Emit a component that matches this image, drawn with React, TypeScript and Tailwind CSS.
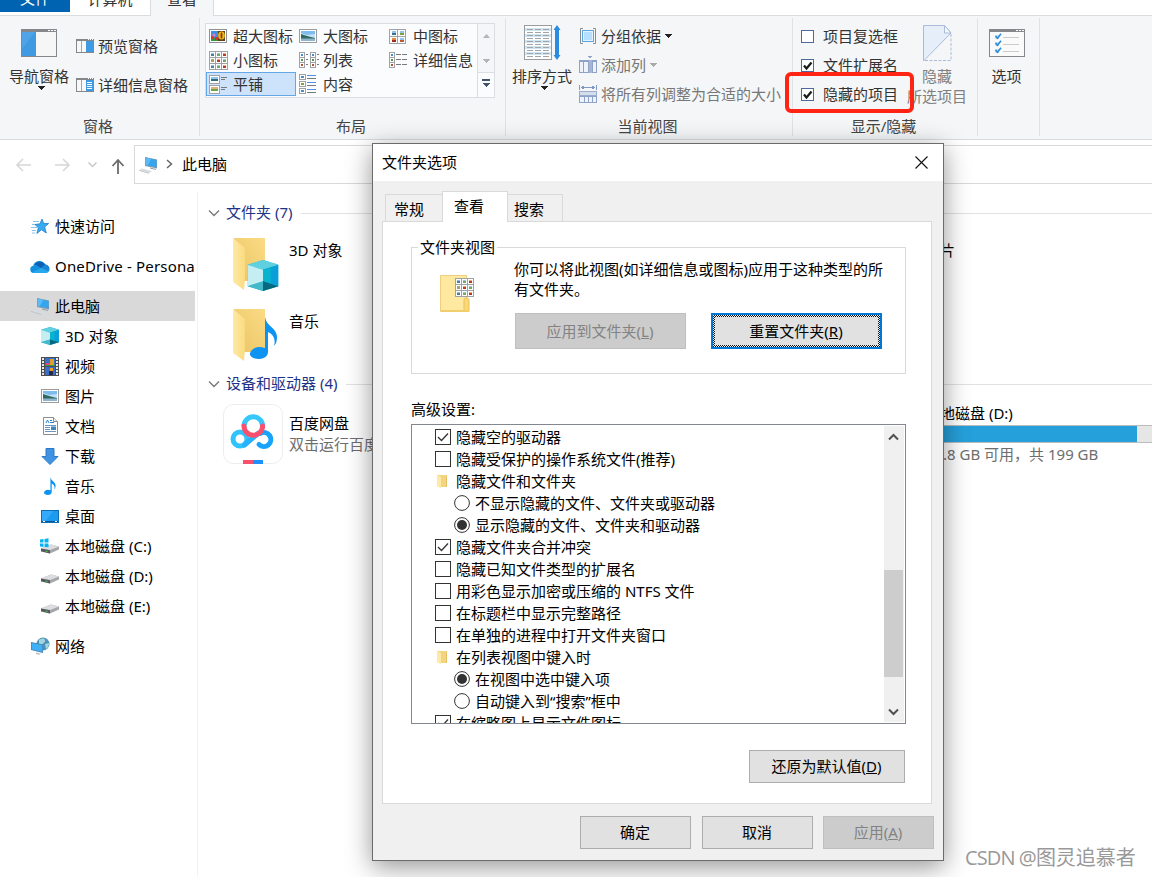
import type { ReactNode } from 'react'
import clsx from 'clsx'

const Caret = ({ className = 'fill-[#222]' }: { className?: string }) => (
  <svg width="7" height="4" viewBox="0 0 7 4" className={className} shapeRendering="crispEdges">
    <path d="M0 0h7v1H6v1H5v1H4v1H3V3H2V2H1V1H0z" />
  </svg>
)

const Chevron = ({ className }: { className?: string }) => (
  <svg width="12" height="8" viewBox="0 0 12 8" fill="none" className={className}>
    <path d="M1 1.500l5 5 5-5" stroke="currentColor" strokeWidth="1.300" />
  </svg>
)

const ScrollArrow = ({ className }: { className?: string }) => (
  <svg width="11" height="8" viewBox="0 0 11 8" fill="none" className={className}>
    <path d="M1 1.500l4.500 4.500L10 1.500" stroke="#505050" strokeWidth="2" />
  </svg>
)

/* ---------- ribbon icons ---------- */

const PaneIcon = ({ side, big }: { side: 'left' | 'right' | 'details'; big?: boolean }) =>
  big ? (
    <svg width="36" height="28" viewBox="0 0 36 28" className="shrink-0">
      <rect x=".5" y=".5" width="35" height="27" fill="#f6f6f6" stroke="#85878a" />
      <path d="M0 0h36v3H0z" fill="#85878a" />
      <path d="M27 1h2v1h-2zM30 1h2v1h-2zM33 1h2v1h-2z" fill="#fff" />
      <path d="M1 3h14v24H1z" fill="#3f9ae2" />
      <path d="M1 3h13L1 20z" fill="#4fa3e6" />
    </svg>
  ) : (
    <svg width="18" height="14" viewBox="0 0 18 14" className="shrink-0">
      <rect x=".5" y=".5" width="17" height="13" fill="#f8f8f8" stroke="#85878a" />
      <path d="M0 0h18v2H0z" fill="#85878a" />
      <path d="M12 0h1v1h-1zM14 0h1v1h-1zM16 0h1v1h-1z" fill="#fff" />
      <path d="M5 2h1v11H5z" fill="#a5a7aa" />
      <path d="M10 2h7v11h-7z" fill="#3f9ae2" />
      {side === 'details' && <path d="M11 4h5v1h-5zM11 6h5v1h-5zM11 8h5v1h-5zM11 10h5v1h-5z" fill="#fff" />}
    </svg>
  )

const Thumb = ({ x, y, tone }: { x: number; y: number; tone: number }) => {
  const tones = [
    ['#8fc4ee', '#4b7f9e'],
    ['#9cc2e4', '#7aa85a'],
    ['#e8b26c', '#b8392a'],
    ['#8ab88a', '#b09a5c'],
  ]
  const [a, b] = tones[tone % 4]
  return (
    <g>
      <path d={`M${x} ${y}h3v1h-3z`} fill={a} />
      <path d={`M${x} ${y + 1}h3v2h-3z`} fill={b} />
    </g>
  )
}

const GridIcon = () => (
  <svg width="19" height="19" viewBox="0 0 19 19" shapeRendering="crispEdges">
    <path d="M0 0h19v19H0z" fill="#a0a2a5" />
    {[0, 1, 2].map((r) =>
      [0, 1, 2].map((c) => (
        <g key={`${r}${c}`}>
          <rect x={1 + c * 6} y={1 + r * 6} width="5" height="5" fill="#fff" />
          <Thumb x={2 + c * 6} y={2 + r * 6} tone={r === 1 ? 3 - c : c} />
        </g>
      ))
    )}
  </svg>
)

const XLIcon = () => (
  <svg width="18" height="14" viewBox="0 0 18 14">
    <rect x=".5" y=".5" width="17" height="13" fill="#fff" stroke="#8e9093" />
    <path d="M2 2h14v10H2z" fill="#3d8fe0" />
    <path d="M2 9h7v3H2z" fill="#2e9a3c" />
    <path d="M2 7h3v3H2zM6 8h3v3H6z" fill="#e02f2f" />
    <circle cx="5" cy="6" r="1.600" fill="#e878c0" />
    <path d="M9 2h7v10H9z" fill="#5c4418" />
    <ellipse cx="12.500" cy="6.500" rx="3.300" ry="4" fill="#f3b81e" />
    <ellipse cx="12.500" cy="6.500" rx="1" ry="3.200" fill="#8a3b12" />
  </svg>
)

const PhotoIcon = () => (
  <svg width="18" height="14" viewBox="0 0 18 14">
    <rect x=".5" y=".5" width="17" height="13" fill="#fff" stroke="#9a9c9f" />
    <path d="M2 2h14v10H2z" fill="#c3e1f7" />
    <path d="M2 2h14v3L8 6 2 4z" fill="#7fbcee" />
    <path d="M2 5c4 1 8 3 14 4v1H2z" fill="#2f6b62" />
    <path d="M2 9.500h14V12H2z" fill="#8fb4cc" />
  </svg>
)

const MediumIcon = () => (
  <svg width="17" height="15" viewBox="0 0 17 15" shapeRendering="crispEdges">
    <path d="M0 0h17v15H0z" fill="#a0a2a5" />
    {[0, 1, 2, 3].map((i) => {
      const x = (i % 2) * 8 + 1
      const y = i < 2 ? 1 : 8
      return (
        <g key={i}>
          <rect x={x} y={y} width="7" height="6" fill="#fff" />
          <rect x={x + 2} y={y + 1} width="4" height="2" fill={i === 2 ? '#e8843c' : '#8fc4ee'} />
          <rect x={x + 2} y={y + 3} width="4" height="2" fill={['#3b6f8e', '#7aa23c', '#a8281c', '#c0592b'][i]} />
        </g>
      )
    })}
  </svg>
)

const ListIcon = ({ cols }: { cols: 1 | 2 }) => (
  <svg width="20" height="16" viewBox="0 0 20 16" shapeRendering="crispEdges">
    {(cols === 2 ? [0, 11] : [0]).map((x) => (
      <g key={x}>
        <rect x={x} y="0" width="6" height="16" fill="#a0a2a5" />
        {[0, 1, 2].map((r) => (
          <g key={r}>
            <rect x={x + 1} y={1 + r * 5} width="4" height="4" fill="#fff" />
            <rect x={x + 2} y={2 + r * 5} width="2" height="2" fill={['#3f8fd0', '#4f9a4a', '#b0582d'][r]} />
            {cols === 2 ? (
              <rect x={x + 7} y={2 + r * 5} width="2" height="1" fill="#77797c" />
            ) : (
              <>
                <rect x="7" y={2 + r * 5} width="5" height="1" fill="#77797c" />
                <rect x="13" y={2 + r * 5} width="5" height="1" fill="#77797c" />
              </>
            )}
          </g>
        ))}
      </g>
    ))}
  </svg>
)

const TilesIcon = () => (
  <svg width="18" height="19" viewBox="0 0 18 19" shapeRendering="crispEdges">
    {[0, 10].map((y) => (
      <g key={y}>
        <rect y={y} width="11" height="9" fill="#a0a2a5" />
        <rect x="1" y={y + 1} width="9" height="7" fill="#fff" />
        <rect x="2" y={y + 2} width="7" height="3" fill={y ? '#e0b080' : '#8fc4ee'} />
        <rect x="2" y={y + 4} width="7" height="2" fill={y ? '#6fa33f' : '#2f6f7e'} />
        <rect x="12" y={y + 2} width="6" height="1" fill="#77797c" />
        <rect x="12" y={y + 4} width="4" height="1" fill="#77797c" />
      </g>
    ))}
  </svg>
)

const ContentIcon = () => (
  <svg width="18" height="20" viewBox="0 0 18 20" shapeRendering="crispEdges">
    {[0, 7, 14].map((y) => (
      <g key={y}>
        <rect y={y} width="7" height="6" fill="#a0a2a5" />
        <rect x="1" y={y + 1} width="5" height="4" fill="#fff" />
        <rect x="2" y={y + 2} width="3" height="2" fill={y === 7 ? '#8a9a3c' : '#4a8fc0'} />
        <rect x="8" y={y + 1} width="9" height="1" fill="#5a8fe0" />
        <rect x="8" y={y + 4} width="9" height="1" fill="#77797c" />
      </g>
    ))}
  </svg>
)

const SortIcon = () => (
  <svg width="37" height="36" viewBox="0 0 37 36">
    <rect x=".5" y=".5" width="27" height="34" fill="#fff" stroke="#9a9c9f" />
    {[3, 9, 15, 21, 27].map((y) => (
      <rect key={y} x="1" y={y} width="26" height="3" fill="#cfe6f2" />
    ))}
    {[4, 7, 10, 13, 16, 19, 22, 25, 28, 31].map((y) => (
      <path key={y} d={`M3 ${y}h6v1H3zM11 ${y}h6v1h-6zM19 ${y}h6v1h-6z`} fill="#a2a4a6" />
    ))}
    <path d="M33 0l3.500 5H35v25h1.500L33 35l-3.500-5H31V5h-1.500z" fill="#2b8be0" />
  </svg>
)

const GroupByIcon = () => (
  <svg width="18" height="16" viewBox="0 0 18 16" fill="none">
    <path d="M4 .5H1.500v15H4M14 .5h2.500v15H14" stroke="#8a8c8f" />
    <rect x="3.500" y="2.500" width="11" height="11" fill="#b5deff" stroke="#5ba6e0" />
    <rect x="4.500" y="3.500" width="9" height="9" stroke="#e2f3ff" />
  </svg>
)

const AddColumnIcon = () => (
  <svg width="18" height="18" viewBox="0 0 18 18" shapeRendering="crispEdges">
    <path d="M9 0h4v1h-1v1h-2V1H9z" fill="#8fa3c8" />
    <path d="M0 4h18v13H0z" fill="#8fa3c8" />
    <path d="M1 6h3v10H1zM5 6h4v10H5zM14 6h3v10h-3z" fill="#edf2fb" />
    <path d="M10 4h3v13h-3z" fill="#a6b5d2" />
  </svg>
)

const FitColumnsIcon = () => (
  <svg width="18" height="18" viewBox="0 0 18 18" shapeRendering="crispEdges">
    <path d="M0 0h1v5H0zM17 0h1v5h-1zM2 2h14v1H2zM3 1h2v3H3zM13 1h2v3h-2z" fill="#8098c2" />
    <path d="M0 6h18v5H0z" fill="#9badcc" />
    <path d="M1 7h16v3H1z" fill="#d5deed" />
    <path d="M0 11h18v7H0z" fill="#8fa3c8" />
    <path d="M1 12h4v5H1zM6 12h3v5H6zM10 12h3v5h-3zM14 12h3v5h-3z" fill="#edf2fb" />
  </svg>
)

const HideIcon = () => (
  <svg width="29" height="37" viewBox="0 0 29 37" fill="none">
    <path d="M.5 36V.5h21L28 8z" fill="#e6eefa" stroke="#a9bbd8" />
    <path d="M21.500 .5V8H28z" fill="#f5f8fd" stroke="#a9bbd8" />
    <path d="M28 9v26.500H1" stroke="#a9bbd8" strokeDasharray="3 1.500" />
  </svg>
)

const OptionsIcon = () => (
  <svg width="36" height="28" viewBox="0 0 36 28" fill="none">
    <rect x=".5" y=".5" width="35" height="27" fill="#fafafa" stroke="#85878a" />
    <path d="M0 0h36v3H0z" fill="#85878a" />
    <path d="M27 1h2v1h-2zM30 1h2v1h-2zM33 1h2v1h-2z" fill="#fff" />
    {[7, 14, 21].map((y) => (
      <g key={y}>
        <rect x="6" y={y - 1} width="4" height="4" fill="#c5def3" />
        <path d={`M6.500 ${y}l2 2.300 3.500-4.500`} stroke="#2a8de0" strokeWidth="1.600" />
        <path d={`M14 ${y + 1.5}h16`} stroke="#c9cbcd" />
      </g>
    ))}
  </svg>
)

/* ---------- explorer icons ---------- */

const PcIcon = () => (
  <svg width="20" height="18" viewBox="0 0 20 18">
    <path d="M7 1l12 2.500v9L7 10z" fill="#7f99ad" />
    <path d="M7.500 1.500l11 2.500v7.300L7.500 9z" fill="#35a5ee" />
    <path d="M7.500 1.500l6 1.300-4 6.600-2-.4z" fill="#5cbaf6" />
    <path d="M12 11.500l6 1.500v1l-6-1.500z" fill="#8e9ba6" />
    <path d="M1 14l3-1.500 10 2.800-3 1.700z" fill="#d6dbdf" />
    <path d="M1 14l10 3v.8L1 14.800z" fill="#b5bcc2" />
  </svg>
)

const CubeIcon = ({ size = 18 }: { size?: number }) => (
  <svg width={size} height={size} viewBox="0 0 32 32">
    <path d="M0 5l16-5 16 5v22l-16 5-16-5z" fill="#29b7cf" />
    <path d="M0 5l16-5 16 5-16 5z" fill="#5ed0e0" />
    <path d="M0 5l16 5v12L0 27z" fill="#c4eef2" />
    <path d="M16 10l16-5v22l-16-5z" fill="#0a9fd8" />
    <path d="M16 10l8-2.500v17L16 22z" fill="#07b3cf" />
    <path d="M0 27l16-5v10z" fill="#43b9c9" />
    <path d="M16 22l16 5-16 5z" fill="#07697f" />
  </svg>
)

const NotePath = () => (
  <path d="M15 0c1 9 12 11 12 20 0 4-1 7-3 9 2-7-1-12-6-14v20c0 4-4 7-9 7S0 40 0 37s4-7 9-7c2 0 4 .5 6 1V0z" fill="#0d94f2" />
)

const VideoIcon = () => (
  <svg width="18" height="19" viewBox="0 0 18 19" shapeRendering="crispEdges">
    <path d="M0 0h18v19H0z" fill="#4a4c4f" />
    <path d="M4 1h10v8H4zM4 10h10v8H4z" fill="#3a6fd0" />
    {[1, 4, 7, 10, 13, 16].map((y) => (
      <path key={y} d={`M1 ${y}h2v2H1zM15 ${y}h2v2h-2z`} fill="#e8e8e8" />
    ))}
    <path d="M5 6h4v3H5z" fill="#d84a8a" />
    <path d="M9 2h4v6H9z" fill="#e0a020" />
    <path d="M4 8h10v1H4z" fill="#3a9a3c" />
    <path d="M9 11h3v3H9z" fill="#f0a01e" />
    <path d="M8 14h4v4H8z" fill="#252a40" />
  </svg>
)

const DocIcon = () => (
  <svg width="15" height="18" viewBox="0 0 15 18">
    <path d="M.5.500h10l4 4v13H.5z" fill="#fff" stroke="#8a8c8f" />
    <path d="M10.500.500v4h4" fill="#eee" stroke="#8a8c8f" />
    <path d="M3 6l1.500-3L6 6M7 3.500h2M7 5.500h4" stroke="#2a86d0" fill="none" />
    <path d="M2 8.500h11M2 10.500h5M2 12.500h5M2 14.500h11" stroke="#6a94bd" />
    <path d="M8 9.500h5V13H8z" fill="#3f86b8" />
  </svg>
)

const DownloadIcon = () => (
  <svg width="18" height="17" viewBox="0 0 18 17">
    <path d="M5 .5h8v8h4L9 16.500 1 8.500h4z" fill="#3f93e2" stroke="#2a78c8" />
  </svg>
)

const MusicIcon = () => (
  <svg width="12" height="18" viewBox="0 0 28 42">
    <NotePath />
  </svg>
)

const DesktopIcon = () => (
  <svg width="18" height="13" viewBox="0 0 18 13">
    <rect x=".5" y=".5" width="17" height="12" fill="#1b9af0" stroke="#0e6fb5" />
    <path d="M1 1h11L5 11H1z" fill="#35aafb" />
    <path d="M1 11h16v1H1z" fill="#0b5690" />
    <path d="M2 11h2v1H2zM14 11h2v1h-2z" fill="#fff" />
  </svg>
)

const DriveIcon = ({ windows }: { windows?: boolean }) => (
  <svg width="20" height="16" viewBox="0 0 20 16">
    <path d="M1 10.500l10-4 8 2v3l-9 4-9-2z" fill="#a5a7aa" />
    <path d="M1 10.500l10-4 8 2L10 12z" fill="#dcdde0" />
    <path d="M1 10.500l9 1.800v3.200l-9-2.200z" fill="#55575b" />
    <path d="M5.500 12.500l2 .5v1l-2-.5z" fill="#41d851" />
    {windows && <path d="M0 1.500l3.500-.5v3.500H0zM4.500 1L8.500.3v4.200h-4zM0 5.500h3.500V9L0 8.500zM4.500 5.500h4v3.700l-4-.3z" fill="#08b4f0" />}
  </svg>
)

const StarIcon = () => (
  <svg width="18" height="17" viewBox="0 0 18 17">
    <path d="M2 3.500h6M1 6.500h4M0 9.500h6M1 12.500h4M1 15h3" stroke="#7dbde8" strokeWidth=".9" />
    <path d="M11 1l1.600 4.300 5 .2-3.900 3.500 1.600 6-4.800-3.200-4.600 3.700 1.400-5.800L4 6.500l4.900-.7z" fill="#38aaf0" stroke="#1873bd" strokeWidth=".7" />
  </svg>
)

const CloudIcon = () => (
  <svg width="20" height="13" viewBox="0 0 20 13">
    <path d="M3.500 13a3.700 3.700 0 01-.3-7.300A6.400 6.400 0 0115.200 4.600a4.300 4.300 0 01.8 8.400z" fill="#1490df" />
    <path d="M4.500 4.500A6.400 6.400 0 0115.200 4.600L11 8 6.500 5.300z" fill="#0f5fb3" />
    <path d="M2 12.500L11 8l4.200-3.400A4.300 4.300 0 0119 11z" fill="#1b86d8" />
    <path d="M2 12.500l9-4.500 8 3.500a4.300 4.300 0 01-3 1.500H3.500z" fill="#28a8ea" />
  </svg>
)

const NetworkIcon = () => (
  <svg width="19" height="18" viewBox="0 0 19 18">
    <circle cx="12" cy="7" r="6.500" fill="#4a94b8" />
    <path d="M8 3c3-2 5-2 6 0s-2 3-3 5-3 0-3-2zM14 7l4-1c0 3-1 5-3 6z" fill="#a5d4e0" />
    <path d="M0 5l12 2.500V16L0 13z" fill="#4a7fa5" />
    <path d="M.7 5.900l10.600 2.200v7L.7 12.500z" fill="#3fb0f5" />
    <path d="M5 15.500l5 1.200-2 1-3-.8z" fill="#b5bcc2" />
  </svg>
)

const FolderIcon = ({ children }: { children?: ReactNode }) => (
  <svg width="50" height="56" viewBox="0 0 50 56" className="shrink-0">
    <defs>
      <linearGradient id="front" x1="0" x2="1">
        <stop offset="0" stopColor="#ffe9a6" />
        <stop offset="1" stopColor="#fadb7e" />
      </linearGradient>
      <linearGradient id="back" x1="0" x2="1" y1="1" y2="0">
        <stop offset="0" stopColor="#e9c465" />
        <stop offset="1" stopColor="#fbdb84" />
      </linearGradient>
    </defs>
    <path d="M1 0h31v43H10z" fill="url(#back)" />
    <path d="M0 0l12 10v29l-1 13L0 44z" fill="url(#front)" />
    {children}
  </svg>
)

const BaiduIcon = () => (
  <svg width="60" height="60" viewBox="0 0 60 60" fill="none" className="shrink-0">
    <rect x=".5" y=".5" width="59" height="59" rx="10" fill="#fff" stroke="#ededed" />
    <circle cx="17" cy="35" r="7" stroke="#2fc4fb" strokeWidth="5" />
    <path d="M36 40.500a7 7 0 1 0 1.500-11.200" stroke="#18a4fb" strokeWidth="5" strokeLinecap="round" />
    <path d="M21.500 41L35 29.500" stroke="#25b2fb" strokeWidth="5" strokeLinecap="round" />
    <path d="M21 22a9.300 9.300 0 0118.600 0" stroke="#35c8fb" strokeWidth="5" />
    <path d="M21 22a9.300 9.300 0 0018.600 0" stroke="#fb4f6e" strokeWidth="5" strokeLinecap="round" />
    <path d="M20 56h10v4H20z" fill="#fb4f6e" />
    <path d="M30 56h10v4H30z" fill="#1e8ffb" />
  </svg>
)

const TinyFolder = () => (
  <svg width="16" height="16" viewBox="0 0 16 16">
    <path d="M2 2h10v12H4z" fill="#f4d57f" />
    <path d="M2 2l4 2v11l-4-1.500z" fill="#ffe9a6" />
    <path d="M11 3h1v11h-1z" fill="#e3c066" />
  </svg>
)

/* ---------- ribbon ---------- */

const Separator = () => <div className="mt-[2px] h-[118px] w-px bg-[#e1e2e4]" />

const Group = ({ label, className, children }: { label?: string; className: string; children: ReactNode }) => (
  <div className={clsx('flex h-[123px] flex-col text-[#333]', className)}>
    <div className="flex h-[100px]">{children}</div>
    <div className="pr-[3px] text-center text-[#444]">{label}</div>
  </div>
)

const layouts = [
  { name: '超大图标', icon: <XLIcon /> },
  { name: '大图标', icon: <PhotoIcon /> },
  { name: '中图标', icon: <MediumIcon /> },
  { name: '小图标', icon: <GridIcon /> },
  { name: '列表', icon: <ListIcon cols={2} /> },
  { name: '详细信息', icon: <ListIcon cols={1} /> },
  { name: '平铺', icon: <TilesIcon />, active: true },
  { name: '内容', icon: <ContentIcon /> },
]

const RibbonCheck = ({ label, checked }: { label: string; checked?: boolean }) => (
  <div className="flex h-[29px] items-center">
    <svg width="13" height="13" viewBox="0 0 13 13" className="mt-[2px] mr-[9px]">
      <rect x=".5" y=".5" width="12" height="12" fill="#fff" stroke="#4d6a9c" />
      {checked && <path d="M3 6.500l2.500 3 5-6" fill="none" stroke="#1a1a1a" strokeWidth="2.200" />}
    </svg>
    {label}
  </div>
)

function Ribbon() {
  return (
    <>
      <div className="flex h-4 border-b border-[#dadbdc] bg-white text-[#333]">
        <div className="h-3 w-[70px] bg-[#0063b1] text-center text-white"><span className="-mt-3 block">文件</span></div>
        <div className="w-20 text-center"><span className="-mt-[11px] block">计算机</span></div>
        <div className="h-4 w-16 border-x border-[#dadbdc] bg-[#f5f6f7] text-center"><span className="-mt-[11px] block">查看</span></div>
      </div>
      <div className="flex h-[124px] border-b border-[#dadbdc] bg-[#f5f6f7]">
        <Group label="窗格" className="w-[199px]">
          <div className="ml-[9px] flex w-[60px] flex-col items-center pt-[13px]">
            <PaneIcon side="left" big />
            <span className="mt-[9px]">导航窗格</span>
            <Caret className="ml-1 fill-[#222]" />
          </div>
          <div className="ml-[7px] flex flex-col pt-5">
            <div className="flex h-5 items-center gap-1"><PaneIcon side="right" />预览窗格</div>
            <div className="mt-[19px] flex h-5 items-center gap-1 whitespace-nowrap"><PaneIcon side="details" />详细信息窗格</div>
          </div>
        </Group>
        <Separator />
        <Group label="布局" className="w-[305px]">
          <div className="mt-[7px] ml-[5px] flex h-[75px] w-[290px] border border-[#dcdde0] bg-[#fbfcfd]">
            <div className="grid w-[271px] grid-cols-[90px_90px_90px] grid-rows-[24px_24px_24px] whitespace-nowrap">
              {layouts.map((l) => (
                <div
                  key={l.name}
                  className={clsx('flex items-center border pl-[2px]', l.active ? 'border-[#66a7e8] bg-[#cde3fb]' : 'border-transparent')}
                >
                  <span className="mr-1 flex w-5 shrink-0">{l.icon}</span>
                  {l.name}
                </div>
              ))}
            </div>
            <div className="flex flex-1 flex-col items-center border-l border-[#dcdde0] bg-[#f5f6f7]">
              <svg width="7" height="4" viewBox="0 0 7 4" className="mt-[10px]" fill="#b2b4b8"><path d="M0 4l3.500-4L7 4z" /></svg>
              <Caret className="mt-[21px] fill-[#b2b4b8]" />
              <div className="mt-[9px] flex w-full flex-1 flex-col items-center gap-[2px] border-t border-[#dcdde0] bg-[#fbfcfd] pt-[6px]">
                <div className="h-[2px] w-2 bg-[#43536b]" />
                <Caret className="fill-[#43536b]" />
              </div>
            </div>
          </div>
        </Group>
        <Separator />
        <Group label="当前视图" className="w-[286px]">
          <div className="ml-[6px] flex w-[60px] flex-col items-center pt-[9px]">
            <SortIcon />
            <span className="mt-[5px]">排序方式</span>
            <Caret className="ml-1 fill-[#222]" />
          </div>
          <div className="ml-[7px] flex flex-col whitespace-nowrap pt-[5px]">
            <div className="flex h-[29px] items-center gap-1"><GroupByIcon />分组依据<Caret className="fill-[#222]" /></div>
            <div className="flex h-[29px] items-center gap-1 text-[#777]"><AddColumnIcon />添加列<Caret className="fill-[#aaa]" /></div>
            <div className="flex h-[29px] items-center gap-1 text-[#777]"><FitColumnsIcon />将所有列调整为合适的大小</div>
          </div>
        </Group>
        <Separator />
        <Group label="显示/隐藏" className="w-[184px]">
          <div className="ml-2 pt-[5px]">
            <RibbonCheck label="项目复选框" />
            <RibbonCheck label="文件扩展名" checked />
            <RibbonCheck label="隐藏的项目" checked />
          </div>
          <div className="ml-[9px] flex w-[60px] flex-col items-center whitespace-nowrap pt-[9px] text-[#808080]">
            <HideIcon />
            <span className="mt-[4px]">隐藏</span>
            <span>所选项目</span>
          </div>
        </Group>
        <Separator />
        <Group className="w-[61px]">
          <div className="flex w-full flex-col items-center pr-[4px] pt-[13px]">
            <OptionsIcon />
            <span className="mt-[9px]">选项</span>
          </div>
        </Group>
        <Separator />
      </div>
    </>
  )
}

function AddressBar() {
  return (
    <div className="flex h-11 items-center">
      <svg width="134" height="44" viewBox="0 0 134 44" fill="none" strokeWidth="1.500">
        <path d="M31 25H17m6-6l-6 6 6 6M55 25h14m-6-6l6 6-6 6" stroke="#d6d6d6" />
        <path d="M88.500 22.500l4 4 4-4" stroke="#c8c8c8" />
        <path d="M118 34V20m-5.500 6l5.500-6 5.500 6" stroke="#6b6b6b" strokeWidth="1.800" />
      </svg>
      <div className="mt-[6px] mb-px flex h-[39px] flex-1 items-center border-y border-l border-[#d9d9d9]">
        <span className="ml-[3px]"><PcIcon /></span>
        <svg width="7" height="10" viewBox="0 0 7 10" fill="none" className="-mt-[2px] ml-[8px]">
          <path d="M1 1l4.500 4L1 9" stroke="#666" strokeWidth="1.500" />
        </svg>
        <span className="-mt-[2px] ml-[9px]">此电脑</span>
      </div>
    </div>
  )
}

/* ---------- explorer body ---------- */

const children = [
  { name: '3D 对象', icon: <CubeIcon /> },
  { name: '视频', icon: <VideoIcon /> },
  { name: '图片', icon: <PhotoIcon /> },
  { name: '文档', icon: <DocIcon /> },
  { name: '下载', icon: <DownloadIcon /> },
  { name: '音乐', icon: <MusicIcon /> },
  { name: '桌面', icon: <DesktopIcon /> },
  { name: '本地磁盘 (C:)', icon: <DriveIcon windows /> },
  { name: '本地磁盘 (D:)', icon: <DriveIcon /> },
  { name: '本地磁盘 (E:)', icon: <DriveIcon /> },
]

const NavItem = ({ name, icon, child, active }: { name: string; icon: ReactNode; child?: boolean; active?: boolean }) => (
  <div className={clsx('flex h-[30px] items-center gap-1 overflow-hidden whitespace-nowrap', child ? 'pl-[39px]' : 'pl-[29px]', active && 'bg-[#d9d9d9]')}>
    <span className="flex w-[22px] shrink-0 justify-center">{icon}</span>
    {name}
  </div>
)

const SectionHeader = ({ title }: { title: string }) => (
  <div className="flex h-5 items-center pl-[10px] text-[#1e3287]">
    <Chevron className="mr-[6px] text-[#777]" />
    <span className="-mt-[2px]">{title}</span>
    <div className="mt-px ml-[9px] h-px flex-1 bg-[#e2e2e2]" />
  </div>
)

function Explorer() {
  return (
    <div className="flex flex-1">
      <nav className="flex w-[195px] flex-col pt-[27px]">
        <NavItem name="快速访问" icon={<StarIcon />} />
        <div className="my-[10px] tracking-[0.17px]"><NavItem name="OneDrive - Persona" icon={<CloudIcon />} /></div>
        <NavItem name="此电脑" icon={<PcIcon />} active />
        {children.map((c) => (
          <NavItem key={c.name} name={c.name} icon={c.icon} child />
        ))}
        <div className="mt-[10px]"><NavItem name="网络" icon={<NetworkIcon />} /></div>
      </nav>
      <div className="mt-2 ml-[2px] w-px bg-[#f2f2f2]" />
      <main className="flex-1 pt-[19px]">
        <SectionHeader title="文件夹 (7)" />
        <div className="flex pt-[15px]">
          <div className="w-[742px] pl-[35px]">
            <div className="flex h-[71px]">
              <FolderIcon>
                <svg x="14" y="22" width="32" height="31" viewBox="0 0 32 32"><CubeIcon size={32} /></svg>
              </FolderIcon>
              <span className="ml-[6px] pt-[2px]">3D 对象</span>
            </div>
            <div className="flex h-[65px]">
              <FolderIcon>
                <g transform="translate(17 8)"><NotePath /></g>
              </FolderIcon>
              <span className="ml-[6px] pt-[2px]">音乐</span>
            </div>
          </div>
          <span className="pt-[2px]">片</span>
        </div>
        <SectionHeader title="设备和驱动器 (4)" />
        <div className="flex whitespace-nowrap pt-[9px]">
          <div className="flex w-[742px] gap-[6px] pl-[25px] pt-px">
            <BaiduIcon />
            <div className="pt-[9px]">
              <div>百度网盘</div>
              <div className="mt-px text-[#6d6d6d]">双击运行百度</div>
            </div>
          </div>
          <div className="flex-1">
            <div>地磁盘 (D:)</div>
            <div className="mt-[2px] h-[18px] border-y border-[#bcbcbc] bg-[#e6e6e6]">
              <div className="h-4 w-[197px] bg-[#26a0da]" />
            </div>
            <div className="mt-[1px] ml-[3px] text-[#6d6d6d]">.8 GB 可用，共 199 GB</div>
          </div>
        </div>
      </main>
    </div>
  )
}

/* ---------- dialog ---------- */

type Option = { kind: 'check' | 'radio' | 'folder'; label: string; on?: boolean }

const options: Option[] = [
  { kind: 'check', label: '隐藏空的驱动器', on: true },
  { kind: 'check', label: '隐藏受保护的操作系统文件(推荐)' },
  { kind: 'folder', label: '隐藏文件和文件夹' },
  { kind: 'radio', label: '不显示隐藏的文件、文件夹或驱动器' },
  { kind: 'radio', label: '显示隐藏的文件、文件夹和驱动器', on: true },
  { kind: 'check', label: '隐藏文件夹合并冲突', on: true },
  { kind: 'check', label: '隐藏已知文件类型的扩展名' },
  { kind: 'check', label: '用彩色显示加密或压缩的 NTFS 文件' },
  { kind: 'check', label: '在标题栏中显示完整路径' },
  { kind: 'check', label: '在单独的进程中打开文件夹窗口' },
  { kind: 'folder', label: '在列表视图中键入时' },
  { kind: 'radio', label: '在视图中选中键入项', on: true },
  { kind: 'radio', label: '自动键入到“搜索”框中' },
  { kind: 'check', label: '在缩略图上显示文件图标', on: true },
]

const Mark = ({ kind, on }: { kind: Option['kind']; on?: boolean }) => {
  if (kind === 'folder') return <TinyFolder />
  return (
    <svg width="16" height="16" viewBox="0 0 16 16" fill="none" stroke="#333">
      {kind === 'check' ? <rect x=".5" y=".5" width="15" height="15" fill="#fff" /> : <circle cx="8" cy="8" r="7.400" fill="#fff" />}
      {kind === 'check' && on && <path d="M3 8l3.500 3.500L13 4.500" strokeWidth="1.300" />}
      {kind === 'radio' && on && <circle cx="8" cy="8" r="5" fill="#333" stroke="none" />}
    </svg>
  )
}

const Button = ({ children, disabled, className }: { children: ReactNode; disabled?: boolean; className: string }) => (
  <button
    className={clsx(
      'flex items-center justify-center border pr-px pb-px',
      disabled ? 'border-[#bfbfbf] bg-[#ccc] text-[#838383]' : 'border-[#adadad] bg-[#e1e1e1]',
      className
    )}
  >
    <span>{children}</span>
  </button>
)

function FolderOptions() {
  return (
    <div className="absolute left-[372px] top-[143px] flex h-[718px] w-[572px] flex-col border border-[#6b6b6b] bg-[#f0f0f0] shadow-[0_6px_24px_rgba(0,0,0,0.42)]">
      <div className="flex h-[37px] items-center justify-between bg-white pl-[9px] pr-[15px]">
        <span className="-mt-[2px]">文件夹选项</span>
        <svg width="13" height="13" viewBox="0 0 13 13" stroke="#111" strokeWidth="1.100"><path d="M.5.500l12 12M12.500.500l-12 12" /></svg>
      </div>
      <div className="relative z-10 -mb-px flex h-[41px] items-end pl-3">
        <div className="mb-px flex h-[27px] w-[57px] items-center border border-r-0 border-b-0 border-[#d9d9d9] pl-2 pt-px">常规</div>
        <div className="flex h-[31px] w-[66px] items-center border border-b-0 border-[#d9d9d9] bg-white pb-[2px] pl-[11px]">查看</div>
        <div className="mb-px flex h-[27px] w-[55px] items-center border border-l-0 border-b-0 border-[#d9d9d9] pl-[6px] pt-px">搜索</div>
      </div>
      <div className="mx-[9px] flex h-[583px] w-[550px] flex-col border border-[#d9d9d9] bg-white pl-7">
        <fieldset className="mt-[15px] h-[137px] w-[495px] border border-[#d9d9d9]">
          <legend className="ml-[6px] px-[2px]">文件夹视图</legend>
          <div className="flex pl-[28px]">
            <svg width="36" height="38" viewBox="0 0 36 38" className="mt-[18px] shrink-0">
              <path d="M.5.500h26v36H.5z" fill="#ffe9a0" stroke="#edcf7d" />
              <path d="M24 36.500V25c0-3 5-3 5 0v11.500z" fill="#fbd874" stroke="#e6c261" />
              <path d="M1 35h28v2H1z" fill="#f1cf70" />
              <g transform="translate(15 3)"><GridIcon /></g>
            </svg>
            <div className="ml-[38px]">
              <p className="mt-[2px] h-10 w-[378px]">你可以将此视图(如详细信息或图标)应用于这种类型的所有文件夹。</p>
              <div className="mt-[14px] ml-px flex gap-[25px]">
                <Button className="h-9 w-[171px]" disabled>应用到文件夹(<u>L</u>)</Button>
                <div className="h-9 w-[171px] bg-[#0078d7] p-[2px]">
                  <div className="h-full bg-[repeating-conic-gradient(#111_0_25%,#f0f0f0_0_50%)] bg-[length:2px_2px] p-[2px]">
                    <button className="flex h-full w-full items-center justify-center bg-[#e1e1e1] pr-px"><span>重置文件夹(<u>R</u>)</span></button>
                  </div>
                </div>
              </div>
            </div>
          </div>
        </fieldset>
        <div className="mt-[25px]">高级设置:</div>
        <div className="mt-[5px] flex h-[300px] w-[495px] overflow-hidden border border-[#828790] py-px">
          <ul className="flex-1 whitespace-nowrap pl-[23px]">
            {options.map((o) => (
              <li key={o.label} className={clsx('flex h-[22px] items-center gap-[5px]', o.kind === 'radio' && 'pl-[19px]')}>
                <Mark kind={o.kind} on={o.on} />
                {o.label}
              </li>
            ))}
          </ul>
          <div className="mr-px flex w-5 flex-col items-center bg-[#f0f0f0]">
            <ScrollArrow className="mt-[7px] mr-px rotate-180" />
            <div className="mr-px mt-[129px] h-[107px] w-[19px] bg-[#cdcdcd]" />
            <ScrollArrow className="mt-[31px] mr-px" />
          </div>
        </div>
        <Button className="mt-[26px] ml-[338px] h-[33px] w-[156px]">还原为默认值(<u>D</u>)</Button>
      </div>
      <div className="mt-3 flex justify-end pr-[9px]">
        <Button className="h-[33px] w-[111px]">确定</Button>
        <Button className="ml-[11px] h-[33px] w-[111px]">取消</Button>
        <Button className="ml-[10px] h-[33px] w-[111px]" disabled>应用(<u>A</u>)</Button>
      </div>
    </div>
  )
}

export default function App() {
  return (
    <div className="relative flex h-[877px] w-[1152px] flex-col overflow-hidden bg-white font-['Noto_Sans','Noto_Sans_CJK_SC',sans-serif] text-[15px] leading-5 text-black">
      <Ribbon />
      <AddressBar />
      <Explorer />
      <FolderOptions />
      <div className="absolute left-[785px] top-[72px] h-[41px] w-[129px] rounded-md border-4 border-[#ff2414]" />
      <div className="absolute left-[965px] top-[846px] whitespace-nowrap font-['Open_Sans','Noto_Sans_CJK_SC',sans-serif] text-[20px] leading-6 text-[#999] [text-shadow:1px_1px_1px_#fff]">
        <span className="tracking-[-0.9px]">CSDN @</span>图灵追慕者
      </div>
    </div>
  )
}
